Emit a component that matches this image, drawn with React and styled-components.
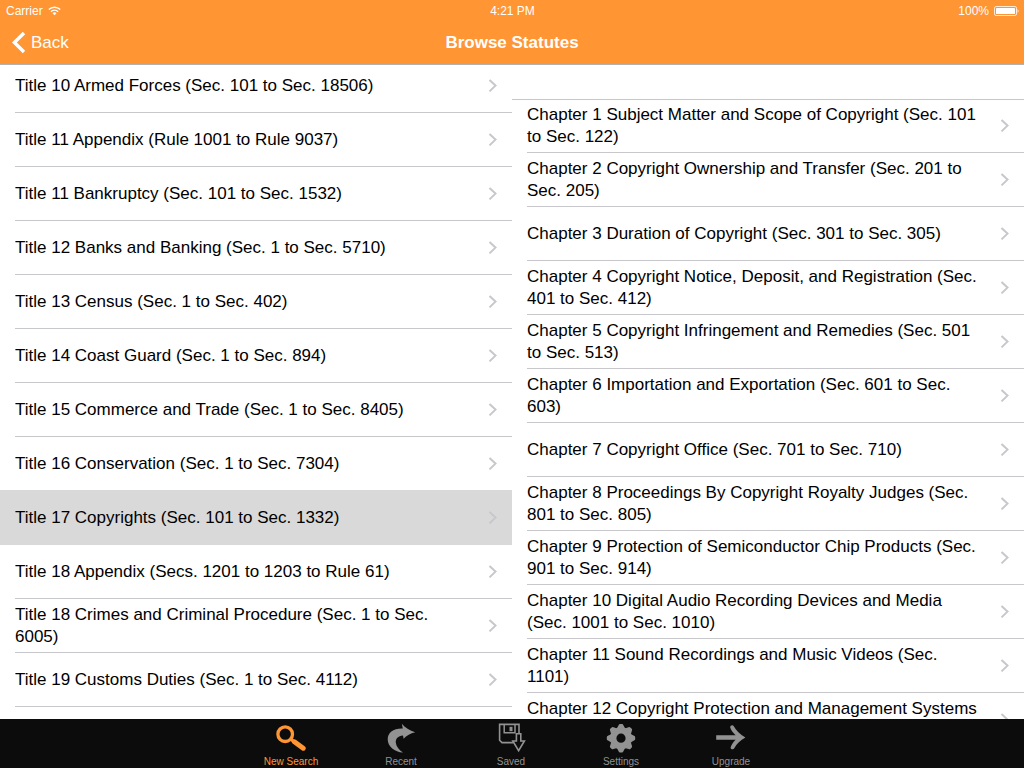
import React from "react";
import styled, { createGlobalStyle } from "styled-components";

const GlobalStyle = createGlobalStyle`
  *, *::before, *::after { box-sizing: border-box; }
  body {
    margin: 0;
    font-family: "Liberation Sans", Arial, sans-serif;
    font-size: 17px;
    line-height: 22px;
    color: #000;
    background: #fff;
  }
  button { font: inherit; color: inherit; border: 0; padding: 0; margin: 0; background: none; cursor: pointer; }
`;

const Screen = styled.div`
  display: flex;
  flex-direction: column;
  height: 100vh;
`;

const TopBar = styled.header`
  flex: none;
  background: #ff9533;
  color: #fff;
  border-bottom: 1px solid #b2b2b2;
`;

const StatusBar = styled.div`
  display: grid;
  grid-template-columns: 1fr auto 1fr;
  align-items: center;
  height: 20px;
  padding: 2px 5px 0 6px;
  font-size: 12px;
  line-height: 18px;
`;

const StatusGroup = styled.div`
  display: flex;
  align-items: center;
  gap: 5px;
  justify-content: ${(p) => (p.$end ? "flex-end" : "flex-start")};

  svg { margin-bottom: 1px; }
`;

const NavBar = styled.div`
  display: grid;
  grid-template-columns: 1fr auto 1fr;
  align-items: center;
  height: 44px;
  padding: 2px 12px 0;
`;

const BackButton = styled.button`
  display: flex;
  align-items: center;
  justify-self: start;
  gap: 5px;
`;

const NavTitle = styled.h1`
  margin: 0;
  font-size: 17px;
  line-height: 22px;
  font-weight: bold;
`;

const Panes = styled.main`
  flex: 1;
  min-height: 0;
  display: grid;
  grid-template-columns: 1fr 1fr;
`;

const Pane = styled.section`
  min-width: 0;
  overflow: hidden;
`;

const PaneHeader = styled.div`
  height: 35px;
  border-bottom: 1px solid #c8c7cc;
`;

const List = styled.ul`
  list-style: none;
  padding: 0;
  margin: ${(p) => (p.$scrolled ? "-6px" : "-1px")} 0 0;
`;

const Row = styled.button`
  display: block;
  width: 100%;
  height: 54px;
  padding-left: 15px;
  text-align: left;
  background: ${(p) => (p.$selected ? "#d9d9d9" : "transparent")};
  box-shadow: ${(p) => (p.$selected ? "0 -1px 0 #d9d9d9" : "none")};
`;

const RowContent = styled.span`
  display: flex;
  align-items: center;
  justify-content: space-between;
  height: 100%;
  padding-right: 14px;
  border-bottom: 1px solid ${(p) => (p.$selected ? "#d9d9d9" : "#c8c7cc")};
`;

const RowLabel = styled.span`
  flex: 0 1 454px;
`;

const TabBar = styled.nav`
  flex: none;
  display: flex;
  justify-content: center;
  height: 49px;
  padding-right: 2px;
  background: #0c0c0c;
`;

const Tab = styled.button`
  display: flex;
  flex-direction: column;
  align-items: center;
  width: 110px;
  padding-top: 4px;
  font-size: 10px;
  line-height: 12px;
  gap: 3px;
  color: ${(p) => (p.$active ? "#ff9533" : "#929292")};
  svg { flex: none; display: block; }
`;

const Chevron = () => (
  <svg width="10" height="14" viewBox="0 0 10 14" fill="none" stroke="#c7c7cc" strokeWidth="2" aria-hidden="true">
    <path d="M1.5.9 7.5 6.6l-6 5.8" />
  </svg>
);

const BackChevron = () => (
  <svg width="14" height="22" viewBox="0 0 14 22" fill="none" stroke="#fff" strokeWidth="3.4" aria-hidden="true">
    <path d="M12 1 2.4 10.5 12 20" />
  </svg>
);

const Wifi = () => (
  <svg width="13" height="10" viewBox="0 0 13 10" fill="none" stroke="#fff" strokeWidth="1.5" aria-hidden="true">
    <path d="M.8 3.5a8.2 8.2 0 0 1 11.4 0M2.9 5.7a5.2 5.2 0 0 1 7.2 0" />
    <path d="M6.5 9.2 4.5 7.2a2.9 2.9 0 0 1 4 0z" fill="#fff" stroke="none" />
  </svg>
);

const Battery = () => (
  <svg width="25" height="10" viewBox="0 0 25 10" aria-hidden="true">
    <rect x=".5" y=".5" width="22" height="9" rx="1.6" fill="none" stroke="#fff" strokeOpacity=".8" />
    <rect x="2" y="2" width="19" height="6" rx=".6" fill="#fff" />
    <path d="M23.6 3.2c1.2.5 1.2 3.1 0 3.6z" fill="#fff" />
  </svg>
);

const TabIcon = ({ children }) => (
  <svg width="30" height="30" viewBox="0 0 30 30" fill="none" stroke="currentColor" aria-hidden="true">
    {children}
  </svg>
);

const SearchIcon = () => (
  <TabIcon>
    <circle cx="9.2" cy="11.2" r="7.3" strokeWidth="3.3" />
    <path d="M14.5 16 19 19.4" strokeWidth="3.4" />
    <path d="M18.4 18.8 27.2 25.2" strokeWidth="5" strokeLinecap="round" />
  </TabIcon>
);

const RecentIcon = () => (
  <TabIcon>
    <path
      d="M15.8.8C19 4.6 23.6 7.6 29.2 9.2 24.4 10.4 20.6 12.4 17.6 15.8L17 12.4C12 12.8 9.4 15.6 9.8 19.6 10.2 23.6 13 27 17 29.6 8.6 28.6 1.8 23.6 1.7 16.4 1.6 9.6 7.6 5.2 16.8 5.6Z"
      fill="currentColor"
      stroke="none"
    />
  </TabIcon>
);

const SavedIcon = () => (
  <TabIcon>
    <path d="M17.4 19.6H6L3.6 17.2V1.4H23V10" strokeWidth="1.6" />
    <path d="M8.2 1.4V9.8H19V1.4" strokeWidth="1.5" />
    <path d="M15 3.8V8.2" strokeWidth="3" />
    <path d="M20.4 10.8H24.8V18H28.4L22.6 27.6 16.8 18H20.4Z" strokeWidth="1.6" />
  </TabIcon>
);

const SettingsIcon = () => (
  <TabIcon>
    <circle cx="15" cy="15.2" r="7.8" strokeWidth="6.4" />
    {[0, 45, 90, 135, 180, 225, 270, 315].map((angle) => (
      <path
        key={angle}
        d="M10.8 5.6 12.6 2.2Q13 1 14 1h2q1 0 1.4 1.2L19.2 5.6Z"
        fill="currentColor"
        stroke="none"
        transform={`rotate(${angle} 15 15.2)`}
      />
    ))}
  </TabIcon>
);

const UpgradeIcon = () => (
  <TabIcon>
    <path
      d="M.2 12.2H19.6C17 9.6 15 7 14.2 4.4 14 2.4 16.8 1.4 17.8 3.2 20 7.4 24 11.4 29.4 14.4 24.4 17.2 20.6 20.8 18.4 25 17.4 27 14.4 26.4 14.6 24.4 15.4 21.8 17.2 19.2 19.6 16.8H.2Z"
      fill="currentColor"
      stroke="none"
    />
  </TabIcon>
);

const titles = [
  "Title 10 Armed Forces (Sec. 101 to Sec. 18506)",
  "Title 11 Appendix (Rule 1001 to Rule 9037)",
  "Title 11 Bankruptcy (Sec. 101 to Sec. 1532)",
  "Title 12 Banks and Banking (Sec. 1 to Sec. 5710)",
  "Title 13 Census (Sec. 1 to Sec. 402)",
  "Title 14 Coast Guard (Sec. 1 to Sec. 894)",
  "Title 15 Commerce and Trade (Sec. 1 to Sec. 8405)",
  "Title 16 Conservation (Sec. 1 to Sec. 7304)",
  "Title 17 Copyrights (Sec. 101 to Sec. 1332)",
  "Title 18 Appendix (Secs. 1201 to 1203 to Rule 61)",
  "Title 18 Crimes and Criminal Procedure (Sec. 1 to Sec. 6005)",
  "Title 19 Customs Duties (Sec. 1 to Sec. 4112)",
];

const chapters = [
  "Chapter 1 Subject Matter and Scope of Copyright (Sec. 101 to Sec. 122)",
  "Chapter 2 Copyright Ownership and Transfer (Sec. 201 to Sec. 205)",
  "Chapter 3 Duration of Copyright (Sec. 301 to Sec. 305)",
  "Chapter 4 Copyright Notice, Deposit, and Registration (Sec. 401 to Sec. 412)",
  "Chapter 5 Copyright Infringement and Remedies (Sec. 501 to Sec. 513)",
  "Chapter 6 Importation and Exportation (Sec. 601 to Sec. 603)",
  "Chapter 7 Copyright Office (Sec. 701 to Sec. 710)",
  "Chapter 8 Proceedings By Copyright Royalty Judges (Sec. 801 to Sec. 805)",
  "Chapter 9 Protection of Semiconductor Chip Products (Sec. 901 to Sec. 914)",
  "Chapter 10 Digital Audio Recording Devices and Media (Sec. 1001 to Sec. 1010)",
  "Chapter 11 Sound Recordings and Music Videos (Sec. 1101)",
  "Chapter 12 Copyright Protection and Management Systems (Sec. 1201 to Sec. 1205)",
];

const tabs = [
  { label: "New Search", Icon: SearchIcon, active: true },
  { label: "Recent", Icon: RecentIcon },
  { label: "Saved", Icon: SavedIcon },
  { label: "Settings", Icon: SettingsIcon },
  { label: "Upgrade", Icon: UpgradeIcon },
];

const StatuteList = ({ items, selected, scrolled }) => (
  <List $scrolled={scrolled}>
    {items.map((item, i) => (
      <li key={item}>
        <Row type="button" $selected={i === selected}>
          <RowContent $selected={i === selected}>
            <RowLabel>{item}</RowLabel>
            <Chevron />
          </RowContent>
        </Row>
      </li>
    ))}
  </List>
);

export default function App() {
  return (
    <Screen>
      <GlobalStyle />
      <TopBar>
        <StatusBar>
          <StatusGroup>
            <span>Carrier</span>
            <Wifi />
          </StatusGroup>
          <span>4:21 PM</span>
          <StatusGroup $end>
            <span>100%</span>
            <Battery />
          </StatusGroup>
        </StatusBar>
        <NavBar>
          <BackButton type="button">
            <BackChevron />
            <span>Back</span>
          </BackButton>
          <NavTitle>Browse Statutes</NavTitle>
        </NavBar>
      </TopBar>
      <Panes>
        <Pane aria-label="Titles">
          <StatuteList items={titles} selected={8} scrolled />
        </Pane>
        <Pane aria-label="Chapters">
          <PaneHeader />
          <StatuteList items={chapters} />
        </Pane>
      </Panes>
      <TabBar>
        {tabs.map(({ label, Icon, active }) => (
          <Tab key={label} type="button" $active={active}>
            <Icon />
            <span>{label}</span>
          </Tab>
        ))}
      </TabBar>
    </Screen>
  );
}
